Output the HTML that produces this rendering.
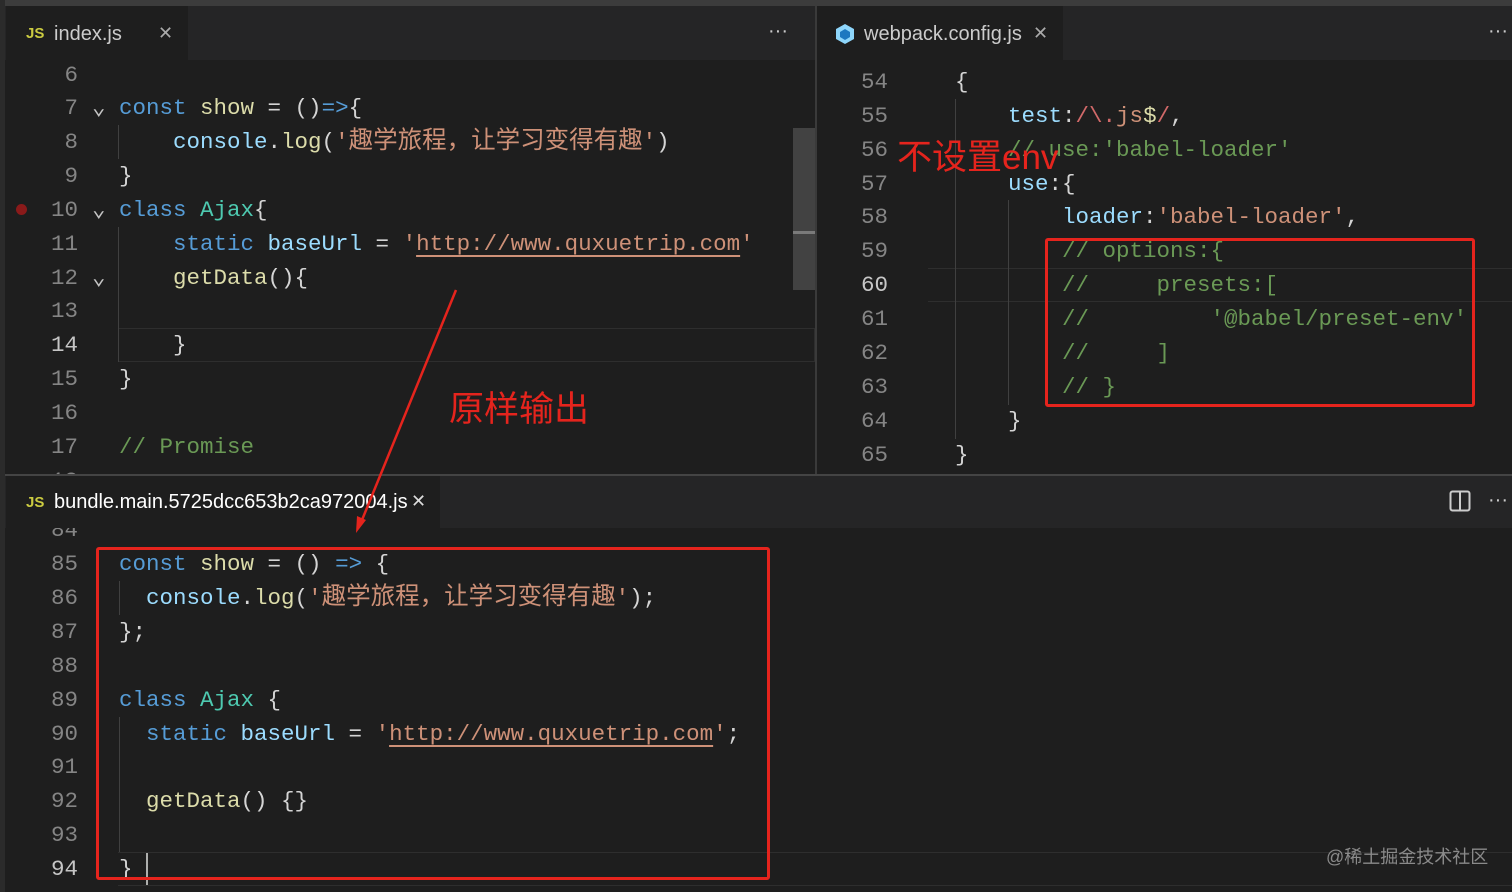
<!DOCTYPE html>
<html><head><meta charset="utf-8"><style>
*{margin:0;padding:0;box-sizing:border-box}
body{width:1512px;height:892px;background:#1e1e1e;position:relative;overflow:hidden;font-family:"Liberation Mono","Noto Sans CJK SC",monospace;}
.a{position:absolute}
.l{position:absolute;height:34px;line-height:34px;font-size:22.5px;white-space:pre;color:#d4d4d4}
.n{position:absolute;height:34px;line-height:34px;font-size:22.5px;color:#858585;text-align:right;width:60px}
.k{color:#569cd6}.v{color:#9cdcfe}.f{color:#dcdcaa}.s{color:#ce9178}.c{color:#6a9955}.t{color:#4ec9b0}.r{color:#d16969}
.cj{font-size:24.5px}
.u{text-decoration:underline;text-decoration-color:#ce9178;text-underline-offset:5px}
.tab{position:absolute;font-family:"Liberation Sans",sans-serif;font-size:20px;color:#cccccc}
.x{position:absolute;font-family:"DejaVu Sans",sans-serif;font-size:18px;color:#aaa}
.g{position:absolute;width:1px;background:#404040}
.box{position:absolute;border:3px solid #e5241d;border-radius:3px}
.red{position:absolute;color:#e5241d;font-family:"Liberation Sans","Noto Sans CJK SC",sans-serif;font-size:35px;white-space:nowrap}
</style></head><body>
<div class="a" style="left:0;top:0;width:1512px;height:6px;background:#3c3c3c"></div>
<div class="a" style="left:0;top:0;width:5px;height:892px;background:#2b2b2b"></div>
<div class="a" style="left:5px;top:6px;width:810px;height:54px;background:#252526"></div>
<div class="a" style="left:6px;top:6px;width:182px;height:54px;background:#1e1e1e"></div>
<div class="tab" style="left:26px;top:25px;color:#cbcb41;font-weight:bold;font-size:15px">JS</div>
<div class="tab" style="left:54px;top:23px">index.js</div>
<div class="x" style="left:158px;top:23px">✕</div>
<div class="tab" style="left:768px;top:20px">···</div>
<div class="a" style="left:815px;top:6px;width:2px;height:470px;background:#3a3a3a"></div>
<div class="a" style="left:817px;top:6px;width:695px;height:54px;background:#252526"></div>
<div class="a" style="left:817px;top:6px;width:246px;height:54px;background:#1e1e1e"></div>
<svg class="a" style="left:835px;top:23px" width="20" height="22" viewBox="0 0 20 22"><path d="M10 1 L19 6 L19 16 L10 21 L1 16 L1 6Z" fill="#8ed6fb"/><path d="M10 6 L15 9 L15 14 L10 17 L5 14 L5 9Z" fill="#1c78c0"/></svg>
<div class="tab" style="left:864px;top:23px">webpack.config.js</div>
<div class="x" style="left:1033px;top:23px">✕</div>
<div class="tab" style="left:1488px;top:20px">···</div>
<div class="a" style="left:793px;top:128px;width:22px;height:162px;background:#424242"></div>
<div class="a" style="left:793px;top:231px;width:22px;height:3px;background:#7a7a7a"></div>
<div class="a" style="left:118px;top:328px;width:697px;height:34px;border:1px solid #2e2e2e"></div>
<div class="g" style="left:118px;top:125px;height:34px"></div>
<div class="g" style="left:118px;top:227px;height:135px"></div>
<div class="a" style="left:16px;top:204px;width:11px;height:11px;border-radius:50%;background:#8a1a1a"></div>
<div class="n" style="left:18px;top:58px">6</div>
<div class="n" style="left:18px;top:91px">7</div><div class="l" style="left:92px;top:91px;color:#c5c5c5">⌄</div>
<div class="l" style="left:119px;top:91px"><span class="k">const</span> <span class="f">show</span> = ()<span class="k">=&gt;</span>{</div>
<div class="n" style="left:18px;top:125px">8</div>
<div class="l" style="left:173px;top:125px"><span class="v">console</span>.<span class="f">log</span>(<span class="s">'<span class="cj">趣学旅程，让学习变得有趣</span>'</span>)</div>
<div class="n" style="left:18px;top:159px">9</div>
<div class="l" style="left:119px;top:159px">}</div>
<div class="n" style="left:18px;top:193px">10</div><div class="l" style="left:92px;top:193px;color:#c5c5c5">⌄</div>
<div class="l" style="left:119px;top:193px"><span class="k">class</span> <span class="t">Ajax</span>{</div>
<div class="n" style="left:18px;top:227px">11</div>
<div class="l" style="left:173px;top:227px"><span class="k">static</span> <span class="v">baseUrl</span> = <span class="s">'<span class="u">http://www.quxuetrip.com</span>'</span></div>
<div class="n" style="left:18px;top:261px">12</div><div class="l" style="left:92px;top:261px;color:#c5c5c5">⌄</div>
<div class="l" style="left:173px;top:261px"><span class="f">getData</span>(){</div>
<div class="n" style="left:18px;top:294px">13</div>
<div class="n" style="left:18px;top:328px;color:#c6c6c6">14</div>
<div class="l" style="left:173px;top:328px">}</div>
<div class="n" style="left:18px;top:362px">15</div>
<div class="l" style="left:119px;top:362px">}</div>
<div class="n" style="left:18px;top:396px">16</div>
<div class="n" style="left:18px;top:430px">17</div>
<div class="l c" style="left:119px;top:430px">// Promise</div>
<div class="n" style="left:18px;top:464px">18</div>
<div class="a" style="left:928px;top:268px;width:584px;height:34px;border-top:1px solid #2e2e2e;border-bottom:1px solid #2e2e2e"></div>
<div class="g" style="left:955px;top:99px;height:340px"></div>
<div class="g" style="left:1008px;top:200px;height:205px"></div>
<div class="n" style="left:828px;top:65px">54</div><div class="l" style="left:955px;top:65px">{</div>
<div class="n" style="left:828px;top:99px">55</div><div class="l" style="left:1008px;top:99px"><span class="v">test</span>:<span class="r">/\.</span><span class="s">js</span><span class="f">$</span><span class="r">/</span>,</div>
<div class="n" style="left:828px;top:133px">56</div><div class="l c" style="left:1008px;top:133px">// use:'babel-loader'</div>
<div class="n" style="left:828px;top:167px">57</div><div class="l" style="left:1008px;top:167px"><span class="v">use</span>:{</div>
<div class="n" style="left:828px;top:200px">58</div><div class="l" style="left:1062px;top:200px"><span class="v">loader</span>:<span class="s">'babel-loader'</span>,</div>
<div class="n" style="left:828px;top:234px">59</div><div class="l c" style="left:1062px;top:234px">// options:{</div>
<div class="n" style="left:828px;top:268px;color:#c6c6c6">60</div><div class="l c" style="left:1062px;top:268px">//     presets:[</div>
<div class="n" style="left:828px;top:302px">61</div><div class="l c" style="left:1062px;top:302px">//         '@babel/preset-env'</div>
<div class="n" style="left:828px;top:336px">62</div><div class="l c" style="left:1062px;top:336px">//     ]</div>
<div class="n" style="left:828px;top:370px">63</div><div class="l c" style="left:1062px;top:370px">// }</div>
<div class="n" style="left:828px;top:404px">64</div><div class="l" style="left:1008px;top:404px">}</div>
<div class="n" style="left:828px;top:438px">65</div><div class="l" style="left:955px;top:438px">}</div>
<div class="a" style="left:5px;top:474px;width:1507px;height:2px;background:#444"></div>
<div class="a" style="left:5px;top:476px;width:1507px;height:52px;background:#252526"></div>
<div class="a" style="left:6px;top:476px;width:434px;height:52px;background:#1e1e1e"></div>
<div class="tab" style="left:26px;top:494px;color:#cbcb41;font-weight:bold;font-size:15px">JS</div>
<div class="tab" style="left:54px;top:491px;color:#fff">bundle.main.5725dcc653b2ca972004.js</div>
<div class="x" style="left:411px;top:491px;color:#ddd">✕</div>
<svg class="a" style="left:1449px;top:490px" width="22" height="22"><rect x="1.5" y="1.5" width="19" height="19" rx="2" fill="none" stroke="#ccc" stroke-width="2"/><line x1="11" y1="2" x2="11" y2="20" stroke="#ccc" stroke-width="2"/></svg>
<div class="tab" style="left:1488px;top:489px">···</div>
<div class="a" style="left:118px;top:852px;width:1394px;height:34px;border-top:1px solid #2e2e2e;border-bottom:1px solid #2e2e2e"></div>
<div class="g" style="left:119px;top:581px;height:34px"></div>
<div class="g" style="left:119px;top:717px;height:135px"></div>
<div class="n" style="left:18px;top:513px;clip-path:inset(15px 0 0 0)">84</div>
<div class="n" style="left:18px;top:547px">85</div><div class="l" style="left:119px;top:547px"><span class="k">const</span> <span class="f">show</span> = () <span class="k">=&gt;</span> {</div>
<div class="n" style="left:18px;top:581px">86</div><div class="l" style="left:146px;top:581px"><span class="v">console</span>.<span class="f">log</span>(<span class="s">'<span class="cj">趣学旅程，让学习变得有趣</span>'</span>);</div>
<div class="n" style="left:18px;top:615px">87</div><div class="l" style="left:119px;top:615px">};</div>
<div class="n" style="left:18px;top:649px">88</div>
<div class="n" style="left:18px;top:683px">89</div><div class="l" style="left:119px;top:683px"><span class="k">class</span> <span class="t">Ajax</span> {</div>
<div class="n" style="left:18px;top:717px">90</div><div class="l" style="left:146px;top:717px"><span class="k">static</span> <span class="v">baseUrl</span> = <span class="s">'<span class="u">http://www.quxuetrip.com</span>'</span>;</div>
<div class="n" style="left:18px;top:750px">91</div>
<div class="n" style="left:18px;top:784px">92</div><div class="l" style="left:146px;top:784px"><span class="f">getData</span>() {}</div>
<div class="n" style="left:18px;top:818px">93</div>
<div class="n" style="left:18px;top:852px;color:#c6c6c6">94</div><div class="l" style="left:119px;top:852px">}</div>
<div class="a" style="left:146px;top:853px;width:2px;height:32px;background:#aeafad"></div>
<div class="a" style="left:1326px;top:843px;font-family:'Liberation Sans','Noto Sans CJK SC',sans-serif;font-size:18px;color:#8a8a8a">@稀土掘金技术社区</div>
<div class="box" style="left:1045px;top:238px;width:430px;height:169px"></div>
<div class="box" style="left:96px;top:547px;width:674px;height:333px"></div>
<svg class="a" style="left:0;top:0" width="1512" height="892"><line x1="456" y1="290" x2="362" y2="520" stroke="#e5241d" stroke-width="2.5"/><path d="M356 533 L357 516 L366 520Z" fill="#e5241d"/></svg>
<div class="red" style="left:449px;top:381px">原样输出</div>
<div class="red" style="left:897px;top:129px">不设置env</div>
</body></html>
